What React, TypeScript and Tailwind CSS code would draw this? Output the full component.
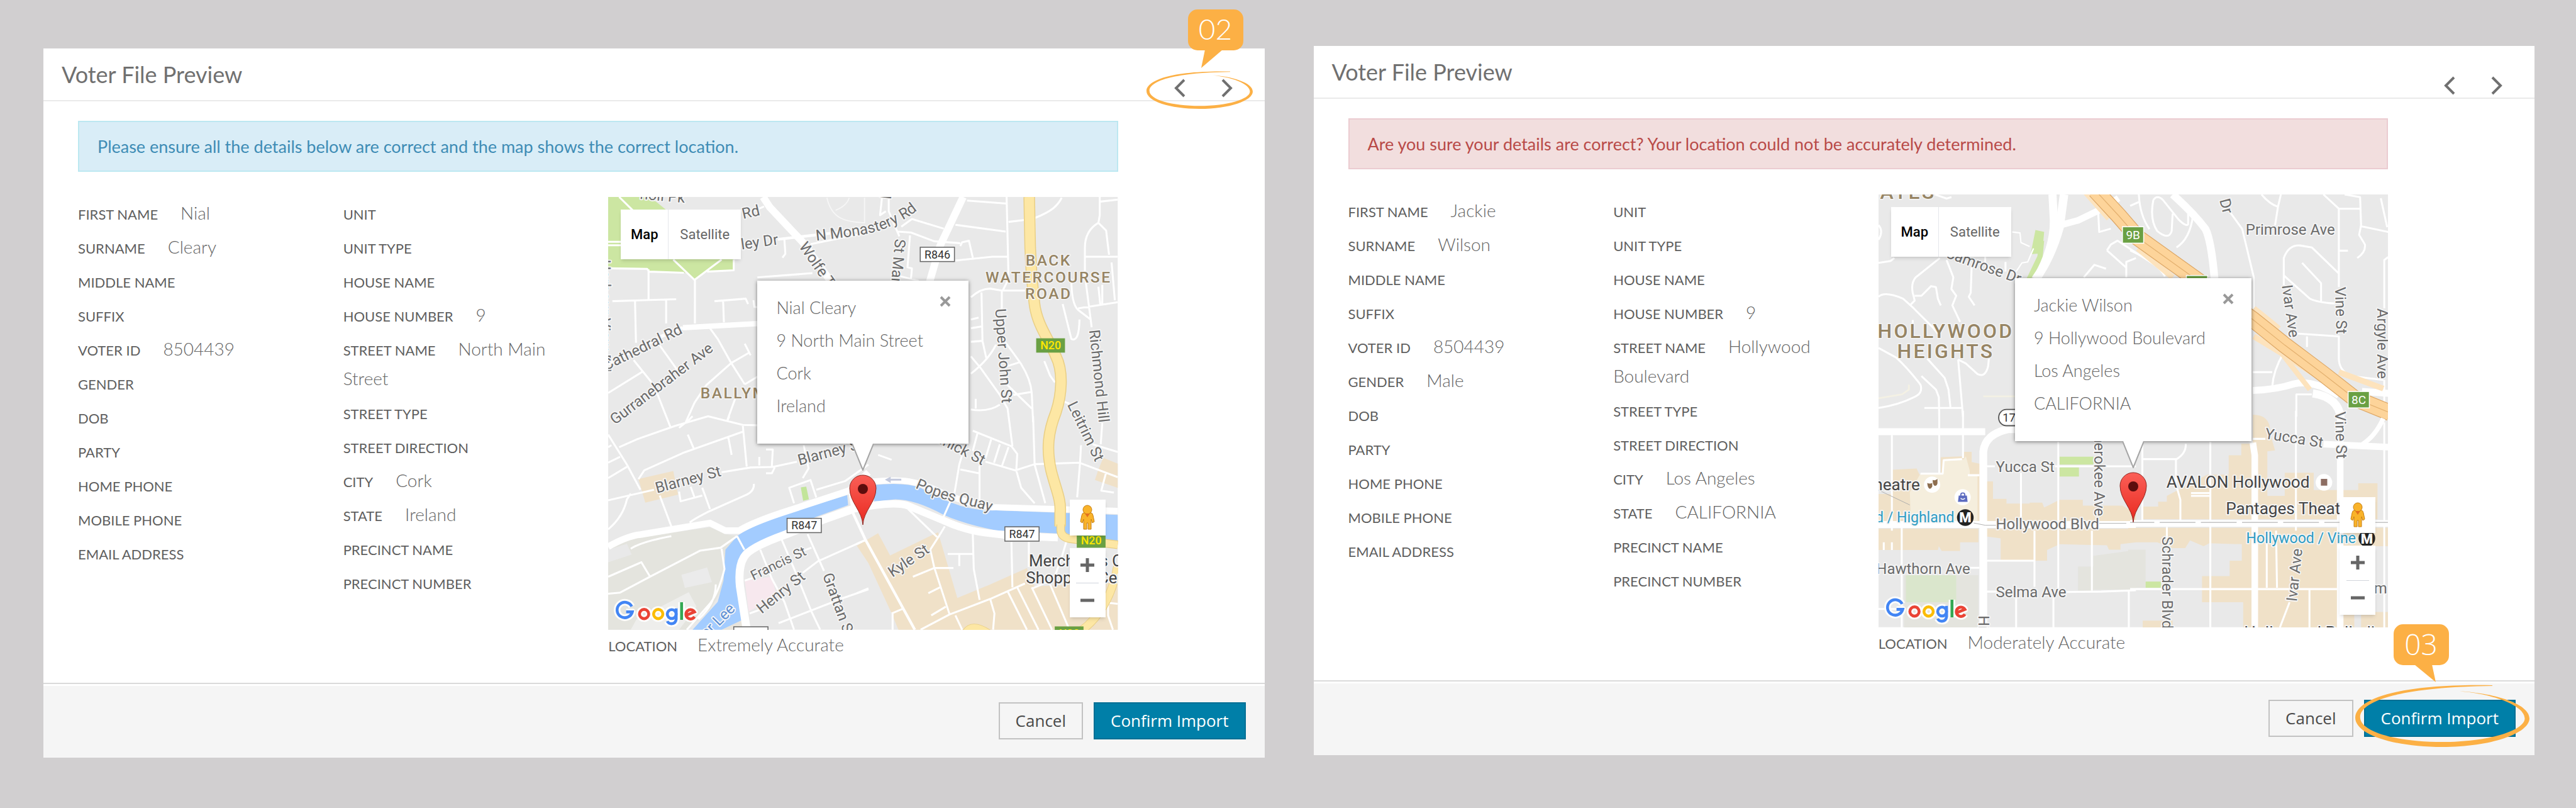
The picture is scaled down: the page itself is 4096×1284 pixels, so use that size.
import React from "react";

type Field = { label: string; value?: string };

type Voter = {
  alert: string;
  tone: "info" | "danger";
  left: Field[];
  right: Field[];
  address: string[];
  accuracy: string;
};

const nial: Voter = {
  alert: "Please ensure all the details below are correct and the map shows the correct location.",
  tone: "info",
  left: [
    { label: "FIRST NAME", value: "Nial" },
    { label: "SURNAME", value: "Cleary" },
    { label: "MIDDLE NAME" },
    { label: "SUFFIX" },
    { label: "VOTER ID", value: "8504439" },
    { label: "GENDER" },
    { label: "DOB" },
    { label: "PARTY" },
    { label: "HOME PHONE" },
    { label: "MOBILE PHONE" },
    { label: "EMAIL ADDRESS" },
  ],
  right: [
    { label: "UNIT" },
    { label: "UNIT TYPE" },
    { label: "HOUSE NAME" },
    { label: "HOUSE NUMBER", value: "9" },
    { label: "STREET NAME", value: "North Main Street" },
    { label: "STREET TYPE" },
    { label: "STREET DIRECTION" },
    { label: "CITY", value: "Cork" },
    { label: "STATE", value: "Ireland" },
    { label: "PRECINCT NAME" },
    { label: "PRECINCT NUMBER" },
  ],
  address: ["Nial Cleary", "9 North Main Street", "Cork", "Ireland"],
  accuracy: "Extremely Accurate",
};

const jackie: Voter = {
  alert: "Are you sure your details are correct? Your location could not be accurately determined.",
  tone: "danger",
  left: [
    { label: "FIRST NAME", value: "Jackie" },
    { label: "SURNAME", value: "Wilson" },
    { label: "MIDDLE NAME" },
    { label: "SUFFIX" },
    { label: "VOTER ID", value: "8504439" },
    { label: "GENDER", value: "Male" },
    { label: "DOB" },
    { label: "PARTY" },
    { label: "HOME PHONE" },
    { label: "MOBILE PHONE" },
    { label: "EMAIL ADDRESS" },
  ],
  right: [
    { label: "UNIT" },
    { label: "UNIT TYPE" },
    { label: "HOUSE NAME" },
    { label: "HOUSE NUMBER", value: "9" },
    { label: "STREET NAME", value: "Hollywood Boulevard" },
    { label: "STREET TYPE" },
    { label: "STREET DIRECTION" },
    { label: "CITY", value: "Los Angeles" },
    { label: "STATE", value: "CALIFORNIA" },
    { label: "PRECINCT NAME" },
    { label: "PRECINCT NUMBER" },
  ],
  address: ["Jackie Wilson", "9 Hollywood Boulevard", "Los Angeles", "CALIFORNIA"],
  accuracy: "Moderately Accurate",
};

/* ---------- map drawing helpers ---------- */

function Roads({ d, w = 10, c = "#ffffff" }: { d: string; w?: number; c?: string }) {
  return <path d={d} fill="none" stroke={c} strokeWidth={w} strokeLinejoin="round" />;
}

type LabelProps = {
  x: number;
  y: number;
  r?: number;
  size?: number;
  fill?: string;
  anchor?: "start" | "middle" | "end";
  children: React.ReactNode;
};

function Label({ x, y, r = 0, size = 78, fill = "#6b6b6b", anchor = "start", children }: LabelProps) {
  return (
    <text
      transform={`translate(${x} ${y}) rotate(${r})`}
      fontSize={size}
      fill={fill}
      textAnchor={anchor}
      stroke="#f5f5f5"
      strokeWidth={12}
      strokeLinejoin="round"
      paintOrder="stroke"
    >
      {children}
    </text>
  );
}

function Area({ x, y, size = 80, children }: { x: number; y: number; size?: number; children: string }) {
  return (
    <text
      x={x}
      y={y}
      fontSize={size}
      className="tracking-widest"
      fontWeight={500}
      fill="#968463"
      textAnchor="middle"
      stroke="#f5f5f5"
      strokeWidth={10}
      strokeLinejoin="round"
      paintOrder="stroke"
    >
      {children}
    </text>
  );
}

function Shield({ x, y, w = 177, children }: { x: number; y: number; w?: number; children: string }) {
  return (
    <g>
      <rect x={x} y={y} width={w} height={74} fill="#fff" stroke="#666" strokeWidth={5} />
      <text x={x + w / 2} y={y + 58} fontSize={58} textAnchor="middle" fill="#333">
        {children}
      </text>
    </g>
  );
}

function National({ x, y }: { x: number; y: number }) {
  return (
    <g>
      <rect x={x} y={y} width={149} height={74} fill="#6aa043" />
      <text x={x + 75} y={y + 57} fontSize={58} fontWeight={500} textAnchor="middle" fill="#ffe800">
        N20
      </text>
    </g>
  );
}

function Exit({ x, y, children }: { x: number; y: number; children?: string }) {
  return (
    <g>
      <rect x={x} y={y} width={110} height={85} fill="#6aa043" stroke="#fff" strokeWidth={5} />
      <text x={x + 55} y={y + 64} fontSize={62} textAnchor="middle" fill="#fff">
        {children}
      </text>
    </g>
  );
}

function GoogleShapes() {
  return (
    <>
      <path d="M155 984 A40 40 0 1 0 158 1012 H126" stroke="#4285f4" />
      <circle cx="219" cy="1023" r="24" stroke="#ea4335" />
      <circle cx="292" cy="1023" r="24" stroke="#fbbc05" />
      <path d="M385 994 V1050 Q382 1073 361 1073 Q345 1073 339 1060" stroke="#4285f4" />
      <circle cx="362" cy="1023" r="23" stroke="#4285f4" />
      <path d="M413 962 V1053" stroke="#34a853" />
      <path d="M436 1030 L480 1012 A24 24 0 1 0 480 1037" stroke="#ea4335" />
    </>
  );
}

function GoogleLogo({ x = 0, y = 0 }: { x?: number; y?: number }) {
  return (
    <g transform={`translate(${x} ${y})`} fill="none">
      <g strokeWidth={34} opacity={0.9} className="[&>*]:stroke-white" strokeLinejoin="round">
        <GoogleShapes />
      </g>
      <g strokeWidth={15}>
        <GoogleShapes />
      </g>
    </g>
  );
}

const mapClass = "block h-full w-full font-['Roboto',sans-serif]";

function CorkMap() {
  return (
    <svg viewBox="33 36 2637 2238" preserveAspectRatio="xMidYMid slice" className={mapClass} role="img" aria-label="Map of Cork">
      <rect x="33" y="36" width="2637" height="2238" fill="#e9e9e9" />
      {/* parks, blocks and river */}
      <path d="M33 36H215L280 60 330 100 683 200V415L545 422 480 460 440 428 245 422 235 408H33Z" fill="#cce6a2" />
      <g transform="translate(0 1170)">
        <path d="M33 690 160 630 560 575 640 610 700 620 620 900 560 1000 440 1104H33Z" fill="#e4e4de" />
        <path d="M33 690 130 660 155 715 33 755Z" fill="#e9e9e9" />
        <path d="M412 820 545 782 570 858 430 888Z" fill="#ebebeb" />
        <path d="M150 1104 180 1050 450 910 490 985 400 1104Z" fill="#eeeeec" />
        <path d="M190 325 370 283 395 405 225 447Z" fill="#f0e1c8" />
        <path d="M1030 368 1058 364 1072 430 1042 437Z" fill="#c2e59a" />
        <path d="M740 850 880 830 905 930 760 1010Z" fill="#f7e8ee" />
        <path d="M735 1050 620 1104H745Z" fill="#e8e4dc" />
        <path d="M1270 408 1000 490Q780 560 700 620L640 690 630 850 600 960 470 1104H620L735 1050 700 800Q710 720 740 690L950 590 1110 520 1275 460Z" fill="#a3ccff" />
      </g>
      <g transform="translate(1320 1170)">
        <path d="M0 670 110 605 172 720 420 600 520 940 690 870 880 785 920 880 1350 860V1104H215L180 1020 60 760Z" fill="#f0e1c8" />
        <path d="M1275 215 1350 245V370L1232 330 1250 275Z" fill="#f0e1c8" />
        <path d="M90 355Q250 340 330 370 450 440 560 470 640 490 720 487L1350 510V645L1100 610 720 590Q560 560 450 510 300 430 200 430L90 440Z" fill="#a3ccff" />
      </g>
      {/* minor streets */}
      <Roads d="M90 36 160 105M33 268H100M33 286H100M370 360 480 465 620 360M33 405 235 408 245 422 425 428M545 422 683 415V360M242 410V565M55 575 385 565M172 575 177 790M333 570V690M482 460V690M583 575 745 562 757 590M628 575 632 685M785 570 790 605 815 607M560 715 600 770 670 895 740 1005M765 840 670 895 540 1010 480 1100 435 1200M740 1005 815 960M740 795 770 855M290 790 390 930M165 880 270 1010 355 1225M33 1050 210 940M650 1190 690 1080M745 125 840 85M945 255 950 330 935 350M805 452 1090 430M1080 280 1380 220" />
      <Roads d="M1165 40C1190 150 1260 165 1360 170V40M1210 105Q1270 80 1280 40" w={6} c="#f6f6f6" />
      <Roads d="M910 255 1350 205" w={14} />
      <Roads d="M835 36 870 90 1040 270 1190 480" w={38} />
      <Roads d="M420 712 820 690" w={28} />
      <Roads d="M420 712 300 760 33 900" w={18} />
      <g transform="translate(1320 0)">
        <Roads d="M130 40 120 130 150 110M165 40V110L220 240M210 215 280 220 400 265 535 275M230 190 285 150 450 200M510 180 770 215M570 55 775 70M775 36 785 460 755 520M785 165 870 155M920 145C1010 110 1040 80 1060 40M275 235 262 400 285 405 280 460M200 440 320 470M510 365 700 345H780M535 290 545 270 580 262 600 350M920 140V260M1257 36V130L1250 170Q1180 210 1180 300V440L1210 670M1250 170 1290 210 1305 335M1260 60 1350 50M1180 345H1350M1065 590 1110 770Q1150 790 1152 670M1110 460Q1110 590 1145 620L1210 670 1215 710M1145 612 1350 580M1318 375 1335 570M1270 490V590M1250 500 1260 595M590 555Q640 510 690 510L750 520H870M750 520V620M645 530 650 780 670 870M590 950Q680 880 720 800M590 670 630 660M590 715 650 705M590 785 650 780M590 860 640 920 740 1060 780 1130 805 1325M730 730Q760 780 800 830L850 900Q900 980 905 1050L912 1200M750 920 845 890M760 990 905 1130M810 1060 900 1045M590 1135Q680 1150 740 1110M615 1080V1130M970 885 1000 960 1025 995M1060 1090 1100 1105" />
        <Roads d="M550 36 430 290 375 480" w={38} />
      </g>
      <g transform="translate(0 1170)">
        <Roads d="M90 160 180 120 380 50 550 0 730 45 810 47M190 325 220 280 420 190 730 80M730 50 750 260M655 110 672 200M33 95 130 250 200 380M33 160 50 150M33 240 95 210M33 320 130 262M445 95 475 165M33 435 270 380M620 290 770 265 885 262 1010 235M850 172H885L880 260M815 210V255M850 295H880L895 265M1045 150 1070 270 1040 320M995 450 970 370 1080 330 1110 420M1110 380 1260 335 1380 250M520 370 560 480M300 410 360 570M400 390 408 440 520 410M460 365 480 420M150 400 130 430Q110 520 33 585M455 550Q480 530 560 490L740 410Q790 390 787 350M150 685Q200 650 360 620M33 830 205 755 250 830M33 918 95 912 250 830 510 695 615 680 700 620M700 620 738 690M620 685 635 790Q600 930 550 980L440 1104M500 1050Q590 970 590 870M820 690 880 840 945 960 995 1104M930 635 1000 800 1085 1010 1130 1104M1065 610 1150 800M1130 745 1365 640M740 850 800 830M1085 680 1030 700M1125 745 1040 810M765 1020 820 1000M915 1070 1250 940 1380 895M400 60 450 20 470 0M650 25 660 0" />
        <Roads d="M33 675Q130 620 200 612L560 552 640 592 710 592Q780 550 930 500L1280 385 1380 290" w={34} />
        <Roads d="M1300 480 1140 537 950 612Q760 680 735 730 705 780 715 880L750 1104" w={42} />
        <Roads d="M1290 370 1310 490" w={34} />
      </g>
      <g transform="translate(1320 1170)">
        <Roads d="M60 340Q200 325 270 337 350 350 450 400 600 460 700 470L1350 490" w={32} />
        <Roads d="M-20 480Q200 435 270 465L450 540Q560 590 660 602L800 618 1040 628" w={38} />
        <Roads d="M-20 500 45 640 300 1104" w={14} />
        <Roads d="M0 660 45 640M265 480 415 625M380 690 425 620 455 570M440 540 480 450 505 400 530 250 545 200M380 690 400 780 480 1025M290 830 400 785 500 785M370 915 430 885M385 1030 460 985M180 1020 240 995M185 1020V1104M0 915 60 890M330 1104 480 1025 690 945 870 865M690 945 712 1020 705 1104M510 1030 545 1104M780 905 880 1104M830 885 940 1104M905 885 1010 1104M1000 870 1100 1104M600 610 605 790 635 950M470 712H600M530 712V775M800 650 805 885M890 650V780M1085 645 1060 730 1020 840M910 890 980 860M635 255V450M535 275 630 295M665 235 820 280 920 248 1150 240 1350 315M600 75 800 155 830 195 825 280 850 370 920 450M625 85 600 180M695 120 665 220M740 145 710 240M785 160 750 260M912 0 920 250 975 450M1160 150 1155 240 1140 420M1270 35 1262 145M1220 145 1350 185M1290 290 1265 385 1330 395M1300 960V1030L1325 1104M1300 965 1350 970M110 200 180 225" />
        <Roads d="M560 1130Q590 1060 690 1130M1350 770Q1310 1000 1160 1110" w={44} c="#e9cf86" />
        <Roads d="M560 1130Q590 1060 690 1130M1350 770Q1310 1000 1160 1110" w={38} c="#fde7a4" />
        <path d="M145 328 175 313V323H230V333H175V345Z" fill="#c3c9dd" />
      </g>
      {/* N20 */}
      <g transform="translate(1320 0)">
        {[
          { w: 60, c: "#e9cf86" },
          { w: 50, c: "#fde7a4" },
        ].map((s) => (
          <Roads
            key={s.w}
            w={s.w}
            c={s.c}
            d="M892 36 897 300 905 450 918 580C930 700 1000 780 1030 860 1070 940 1060 1060 1030 1150 990 1250 980 1340 1005 1450 1030 1550 1058 1600 1052 1670V1740"
          />
        ))}
        <Roads d="M1055 1730V1760Q1058 1795 1100 1803L1350 1835" w={44} c="#e9cf86" />
        <Roads d="M1055 1720V1760Q1058 1795 1100 1803L1350 1835" w={36} c="#fde7a4" />
      </g>
      {/* labels */}
      <Label x={196} y={46} r={5}>noll Pk</Label>
      <Label x={-8} y={360} r={90}>Harbour View Rd</Label>
      <Label x={732} y={150} r={-13}>Rd</Label>
      <Label x={724} y={308} r={-8}>ley Dr</Label>
      <path id="monastery" d="M1110 262C1250 245 1400 235 1500 185S1620 120 1680 60" fill="none" />
      <text fontSize={78} fill="#6b6b6b" stroke="#f5f5f5" strokeWidth={12} strokeLinejoin="round" paintOrder="stroke">
        <textPath href="#monastery">N Monastery Rd</textPath>
      </text>
      <Label x={1018} y={292} r={55}>Wolfe Tone</Label>
      <Label x={22} y={934} r={-26}>Cathedral Rd</Label>
      <Label x={68} y={1216} r={-37}>Gurranebraher Ave</Label>
      <Area x={745} y={1078}>BALLYMAC</Area>
      <Shield x={1648} y={296}>R846</Shield>
      <Label x={1450} y={-50} r={97}>Rd</Label>
      <Label x={1518} y={252} r={95}>St Mary's</Label>
      <Area x={2312} y={390}>BACK</Area>
      <Area x={2312} y={478}>WATERCOURSE</Area>
      <Area x={2312} y={563}>ROAD</Area>
      <Label x={2036} y={615} r={86}>Upper John St</Label>
      <National x={2248} y={767} />
      <Label x={2522} y={725} r={84}>Richmond Hill</Label>
      <Label x={2408} y={1110} r={64}>Leitrim St</Label>
      <Label x={285} y={1568} r={-15}>Blarney St</Label>
      <Label x={1022} y={1424} r={-15}>Blarney St</Label>
      <Shield x={959} y={1698}>R847</Shield>
      <Label x={785} y={2020} r={-26} size={70}>Francis St</Label>
      <Label x={828} y={2194} r={-39}>Henry St</Label>
      <Label x={1142} y={1992} r={70}>Grattan St</Label>
      <Label x={694} y={2170} r={-45} fill="#5b8fd6" anchor="end">River Lee</Label>
      <Shield x={683} y={2259}>R847</Shield>
      <Label x={1968} y={1424} r={27} anchor="end">Dominick St</Label>
      <path id="popes" d="M1620 1540Q1740 1595 1850 1620T2050 1675" fill="none" />
      <text fontSize={78} fill="#6b6b6b" stroke="#f5f5f5" strokeWidth={12} strokeLinejoin="round" paintOrder="stroke">
        <textPath href="#popes">Popes Quay</textPath>
      </text>
      <Label x={1504} y={2004} r={-34}>Kyle St</Label>
      <Shield x={2086} y={1742}>R847</Shield>
      <National x={2458} y={1776} />
      <Label x={2210} y={1948} size={84} fill="#444">Merchant's Quay</Label>
      <Label x={2195} y={2033} size={84} fill="#444">Shopping Centre</Label>
      <National x={2344} y={2257} />
      <GoogleLogo y={1170} />
    </svg>
  );
}

function Metro({ x, y }: { x: number; y: number }) {
  return (
    <g>
      <circle cx={x} cy={y} r={43} fill="#222" />
      <text x={x} y={y + 26} fontSize={72} fontWeight={900} textAnchor="middle" fill="#fff">
        M
      </text>
    </g>
  );
}

function HollywoodMap() {
  const tan = "#f0e1c8";
  const spine = "M-180 30-60 160 40 275 320 475 635 698 800 830 1000 980 1160 1105 1345 1180";
  return (
    <svg viewBox="48 51 2637 2238" preserveAspectRatio="xMidYMid slice" className={mapClass} role="img" aria-label="Map of Hollywood">
      <rect x="48" y="51" width="2637" height="2238" fill="#e9e9e9" />
      {/* blocks */}
      <path d="M860 235 905 245 895 355 835 360ZM880 300 905 290 895 400 835 490H812L870 370Z" fill="#cce6a2" />
      <g transform="translate(0 1170)">
        <path d="M48 430H120V305L245 298 260 330H370V240L490 235V212H530V265L600 280V570H48ZM605 365H640V455H710V480H830V475H895L905 500 985 460H1105V490H1310L1380 530V570H605ZM48 610H565V680H470V725H375L360 700 355 720H48ZM605 610H1380V680L1300 690V718H1240L1230 695 985 690 920 720V775H680V660L605 650Z" fill={tan} />
        <path d="M265 325H380L385 255 490 250 500 235 520 310V335H560V570H215L210 420Z" fill="#f5eedd" />
        <path d="M180 850H565V1120H180ZM1160 750 1380 720V925H1160ZM1080 805H1160V930H1080Z" fill="#e4e4de" />
        <path d="M190 850H450V990H190Z" fill="#dae6cc" />
        <path d="M985 237H1160V278H985ZM985 293H1085V340H985Z" fill="#cce6a2" />
      </g>
      <g transform="translate(1350 1170)">
        <path d="M635 20Q730 20 725 120L750 205 710 210V440H800V320H950V410H1180V375H1280V560H65V495H145V470H190V440L400 330H510V230H575V170H635ZM-10 605H1350V1120H585V990H372V855H515V775H578V690L410 685 380 700 310 670 285 710H220L140 680H-10ZM65 1085H220V1120H65Z" fill={tan} />
        <path d="M-10 718H80V915H-10Z" fill="#e4e4de" />
        <path d="M80 883H160V915H80Z" fill="#cce6a2" />
        <path d="M1160 700H1350V1040H1195V1120H1160Z" fill="#e9e9e9" />
      </g>
      {/* streets, north half */}
      <Roads d="M48 405 110 395 130 380M48 210Q75 240 48 285M340 51 400 72 425 65M365 380 240 480Q215 510 225 560L235 600 215 620M235 575H270L320 525 345 530 355 590 370 625M400 390 435 480 425 540 450 575 430 625 470 710M48 580Q80 550 175 590L230 640 330 740 370 790M530 420 525 560 515 580 545 625M600 370V400M705 400V450M48 845 140 895Q200 950 265 1035 280 1080 230 1100 150 1140 48 1155M300 900 390 1000 410 1060 420 1150M270 990 345 1060 360 1100 362 1200M285 1155H480M460 905 485 1200M460 905 500 925 560 980Q600 1000 615 940L620 890M1230 340 1250 310 1285 290 1500 430M1230 340 1330 430M1330 480V400L1380 380M1110 480 1165 415 1225 435M1185 150 1190 245 1250 228M225 700 225 740" />
      <Roads d="M740 245 780 250 785 300 830 320M760 450 790 405 820 400 850 330" w={7} />
      <Roads d="M48 1105 170 1085 205 1060V1035M590 1095H757" w={9} c="#f4f1e4" />
      <Roads d="M948 51 955 180Q960 320 865 490" w={42} />
      <Roads d="M1008 51 985 220Q940 380 860 490" w={44} />
      <Roads d="M970 215 1080 185 1215 120 1290 70" w={34} />
      <g transform="translate(1350 0)">
        <Roads d="M120 80Q140 50 170 80L250 180Q290 220 300 205V150M120 80Q100 180 140 240 200 290 215 240L220 150M45 51Q50 160 100 230M0 110 45 90M325 160Q310 280 240 325M0 340Q150 410 180 475M680 51Q720 100 765 115L780 51M765 115 750 210M515 140 580 230 640 480V660M1000 51 1080 125H1190M1110 51 1190 65 1195 210 1185 260 1215 310Q1220 350 1175 380M1195 215 1335 245M1297 70 1330 220M1080 125V530M1080 342H1127M795 520V380Q820 310 880 315L940 325 1080 460M795 470 930 590Q970 610 1060 615M890 405 988 510V605M1335 375 1315 390V640M1315 1010V1130M860 770 1080 785V900Q1080 960 1140 990L1310 1010M915 785V840M795 870Q740 960 735 1050M635 970H735M860 1200V1085H940" />
        <Roads d="M220 51Q330 150 390 230 420 290 437 490" w={40} />
        <Roads d="M635 1065Q760 1060 850 1030 950 1010 1080 1090M1200 1070 1340 1080" w={36} />
        <Roads d="M945 1080Q1080 1100 1090 1210" w={42} />
        {/* freeway */}
        <Roads d="M-230 40-110 175M40 330 220 480M640 640 770 745M640 785 780 870 1080 1060M1080 970 1310 1055" w={30} c="#fde3bd" />
        <Roads d="M790 880 930 1060" w={26} c="#fde3bd" />
        <Roads d={spine} w={86} c="#dda766" />
        <Roads d={spine} w={78} c="#fdd49a" />
        <Roads d={spine} w={4} c="#e3b06f" />
      </g>
      {/* streets, south half */}
      <g transform="translate(0 1170)">
        <Roads d="M362 0V320M485 0V245M117 125V620M168 600V1120M265 325H380L385 255 480 250M510 333H570M605 287H650M960 287H1380M785 320V560M978 160V930M855 620V910M605 775H855M1152 620V930M605 935H660M1020 937 1200 935 1380 928M760 940V1120M953 960V1120M1343 930V1120M520 812H570M48 1025H180M75 680V720M117 680V720" />
        <Roads d="M48 108H600M48 588H1380" w={36} />
        <Roads d="M590 1120V210Q600 120 720 95H760" w={40} />
        <Roads d="M48 410 210 487M540 580 600 592H660M1190 582H1330" w={3} c="#aaaaaa" />
      </g>
      <g transform="translate(1350 1170)">
        <Roads d="M0 582H1335M1000 172 1335 188M635 165 645 230V1120M1087 0V1120" w={34} />
        <Roads d="M635 145H700M858 0V620M65 250H240Q290 220 288 170M237 250V380L260 460V570M63 160V570M415 160V1120M190 600V660M707 620V915M755 620 760 915M0 922H1080M928 920V1120M825 990 775 1120M315 425H415M315 440H415M1315 60V1120" />
        <Roads d="M1200 175Q1270 130 1310 40" w={24} />
        <path d="M0 577H1335" fill="none" stroke="#b5b5b5" strokeWidth={4} strokeDasharray="185 28" strokeDashoffset="60" />
      </g>
      {/* labels */}
      <Area x={95} y={73} size={104}>ESTATES</Area>
      <Label x={775} y={514} r={20} anchor="end">Camrose Dr</Label>
      <Area x={396} y={793} size={104}>HOLLYWOOD</Area>
      <Area x={396} y={896} size={104}>HEIGHTS</Area>
      <rect x={670} y={1163} width={150} height={84} rx={40} fill="#fff" stroke="#555" strokeWidth={6} />
      <text x={690} y={1226} fontSize={60} fill="#333">170</text>
      <Exit x={1310} y={218}>9B</Exit>
      <Exit x={1641} y={470} />
      <Label x={1812} y={80} r={75}>Dr</Label>
      <Label x={1948} y={258}>Primrose Ave</Label>
      <Label x={2135} y={522} r={82}>Ivar Ave</Label>
      <Label x={2410} y={530} r={88}>Vine St</Label>
      <Label x={2628} y={640} r={90}>Argyle Ave</Label>
      <Exit x={2478} y={1070}>8C</Exit>
      <Label x={262} y={1580} size={85} fill="#444" anchor="end">Theatre</Label>
      <circle cx={325} cy={1552} r={42} fill="#fff" />
      <path d="M328 1528Q340 1533 353 1522V1545Q350 1560 338 1558 328 1552 328 1528ZM300 1543Q313 1550 326 1543V1562Q320 1574 312 1573 302 1568 300 1543Z" fill="#8d6e4f" />
      <circle cx={483} cy={1617} r={42} fill="#fff" />
      <path d="M463 1608H505L509 1641H459Z" fill="#5c6bc0" />
      <path d="M474 1612V1603Q474 1595 484 1595 494 1595 494 1603V1612" fill="none" stroke="#5c6bc0" strokeWidth={6} />
      <path d="M473 1622Q484 1634 495 1622" fill="none" stroke="#fff" strokeWidth={5} />
      <Label x={440} y={1748} size={75} fill="#2e9cc3" anchor="end">Hollywood / Highland</Label>
      <Metro x={497} y={1722} />
      <Label x={522} y={2013} anchor="end">Hawthorn Ave</Label>
      <Label x={655} y={1485}>Yucca St</Label>
      <Label x={1163} y={1715} r={90} anchor="end">Cherokee Ave</Label>
      <Label x={655} y={1782}>Hollywood Blvd</Label>
      <Label x={655} y={2133}>Selma Ave</Label>
      <Label x={565} y={2228} r={90}>Highland Ave</Label>
      <Label x={2045} y={1313} r={9}>Yucca St</Label>
      <Label x={2410} y={1175} r={88}>Vine St</Label>
      <Label x={1538} y={1568} size={85} fill="#444">AVALON Hollywood</Label>
      <circle cx={2353} cy={1540} r={43} fill="#fff" />
      <rect x={2337} y={1522} width={33} height={35} fill="#8d6e63" />
      <Label x={1845} y={1703} size={85} fill="#444">Pantages Theatre</Label>
      <Label x={2518} y={1855} size={75} fill="#2e9cc3" anchor="end">Hollywood / Vine</Label>
      <Metro x={2575} y={1830} />
      <Label x={1517} y={1820} r={90}>Schrader Blvd</Label>
      <Label x={2212} y={2158} r={-84}>Ivar Ave</Label>
      <Label x={2680} y={2113} anchor="end">Selm</Label>
      <Label x={1940} y={2345} size={85} fill="#444">Hollywood Palladium</Label>
      <GoogleLogo x={15} y={1185} />
    </svg>
  );
}

/* ---------- map overlays ---------- */

function Marker() {
  return (
    <svg viewBox="0 0 44 81" className="h-[81px] w-[44px]" aria-hidden="true">
      <defs>
        <linearGradient id="pin" x1="0" y1="0" x2="0" y2="1">
          <stop offset="0" stopColor="#fb5f57" />
          <stop offset="1" stopColor="#e8291f" />
        </linearGradient>
      </defs>
      <path d="M22 80C21 58 1 44 1 22a21 21 0 0 1 42 0C43 44 23 58 22 80Z" fill="url(#pin)" stroke="#8f2620" strokeWidth="1" />
      <circle cx="22" cy="23" r="8" fill="#5d0d0d" />
    </svg>
  );
}

function Pegman() {
  return (
    <svg viewBox="0 0 24 40" className="h-10 w-6" aria-hidden="true">
      <g fill="#f9b32a" stroke="#c77f12" strokeWidth="1">
        <path d="M6 13H18Q20 13 21 17L23 27 20 29 18 23V39H13V29H11V39H6V23L4 29 1 27 3 17Q4 13 6 13Z" />
        <circle cx="12" cy="8" r="7" />
      </g>
      <path d="M8 14 12 20 16 14Z" fill="#e2711d" />
    </svg>
  );
}

function MapView({ voter, wide, children }: { voter: Voter; wide?: boolean; children: React.ReactNode }) {
  return (
    <div className="relative aspect-[2637/2238] w-full overflow-hidden">
      {children}
      <div className="absolute top-5 left-5 flex h-[79px] bg-white font-['Roboto',sans-serif] text-[22px] shadow-md">
        <button type="button" className="w-[76px] border-r border-gray-200 font-medium text-black">
          Map
        </button>
        <button type="button" className="w-[115px] text-[#666]">
          Satellite
        </button>
      </div>

      <div className="absolute top-[441px] left-1/2 -translate-x-1/2">
        <Marker />
      </div>

      <div
        className={
          "absolute top-[133px] left-1/2 h-[259px] -translate-x-1/2 bg-white shadow-[0_1px_6px_rgba(0,0,0,0.5)] " +
          (wide ? "w-[376px]" : "w-[336px]")
        }
      >
        <ul className="pt-[17px] pl-[30px] text-[27px] leading-[52px] font-light text-[#666]">
          {voter.address.map((line) => (
            <li key={line}>{line}</li>
          ))}
        </ul>
        <button type="button" aria-label="Close" className="absolute top-6 right-7">
          <svg viewBox="0 0 18 18" className="h-[18px] w-[18px]" aria-hidden="true">
            <path d="M2 2 16 16M16 2 2 16" stroke="#999" strokeWidth="4" />
          </svg>
        </button>
        <svg viewBox="0 0 34 43" className="absolute top-full left-1/2 h-[43px] w-[34px] -translate-x-1/2" aria-hidden="true">
          <path d="M0 0 17 43 34 0Z" fill="#fff" />
          <path d="M0 0 17 42 34 0" fill="none" stroke="#a5a5a5" strokeWidth="2" />
        </svg>
      </div>

      <div className="absolute right-5 bottom-5 flex w-[57px] flex-col gap-5">
        <button type="button" aria-label="Street View" className="flex h-[57px] items-center justify-center bg-white shadow-md">
          <Pegman />
        </button>
        <div className="flex flex-col items-center bg-white shadow-md">
          <button type="button" aria-label="Zoom in" className="flex h-[55px] w-full items-center justify-center">
            <svg viewBox="0 0 22 22" className="h-[22px] w-[22px]" aria-hidden="true">
              <path d="M0 11H22M11 0V22" stroke="#666" strokeWidth="5" />
            </svg>
          </button>
          <div className="h-px w-9 bg-gray-300" />
          <button type="button" aria-label="Zoom out" className="flex h-[54px] w-full items-center justify-center">
            <svg viewBox="0 0 22 22" className="h-[22px] w-[22px]" aria-hidden="true">
              <path d="M0 11H22" stroke="#666" strokeWidth="5" />
            </svg>
          </button>
        </div>
      </div>
    </div>
  );
}

/* ---------- annotations ---------- */

function Ring({ className }: { className: string }) {
  return (
    <svg viewBox="0 0 100 100" preserveAspectRatio="none" className={"pointer-events-none absolute max-w-none " + className} aria-hidden="true">
      <path
        d="M78.7 1C20-2 0 27 0 53 0 80 22 100 50 100 78 100 100 78 100 54 100 32 82 14 60 10.5 80 15 97.3 34 97.3 54 97.3 74 76 92 50 92 24 92 2.8 76 2.8 52 2.8 29 22 4 78.7 2Z"
        fill="#fcb045"
      />
    </svg>
  );
}

function Callout({ flip, className, children }: { flip?: boolean; className: string; children: string }) {
  return (
    <div className={"pointer-events-none absolute h-[93px] w-[88px] " + className}>
      <svg viewBox="0 0 88 93" className="absolute inset-0 h-full w-full" aria-hidden="true">
        <rect width="88" height="65" rx="15" fill="#fcb045" />
        <path d={flip ? "M33 64 67 92 61 64Z" : "M27 64 21 93 55 64Z"} fill="#fcb045" />
      </svg>
      <span className="relative block text-center text-[46px] leading-[62px] font-light text-white">{children}</span>
    </div>
  );
}

/* ---------- panel ---------- */

function FieldList({ fields }: { fields: Field[] }) {
  return (
    <dl className="pt-[2px] text-[28px] leading-[47px]">
      {fields.map((f) => (
        <div key={f.label} className="mb-[7px]">
          <dt className="mr-9 inline text-[22px] leading-none text-[#5f5f5f]">{f.label}</dt>
          <dd className="inline font-light text-[#666]">{f.value}</dd>
        </div>
      ))}
    </dl>
  );
}

function Chevron({ d }: { d: string }) {
  return (
    <svg viewBox="0 0 18 30" className="h-[30px] w-[18px]" aria-hidden="true">
      <path d={d} fill="none" stroke="#707070" strokeWidth="4" />
    </svg>
  );
}

function PreviewPanel({
  voter,
  wide,
  children,
  navNote,
  confirmNote,
  className = "",
}: {
  voter: Voter;
  wide?: boolean;
  children: React.ReactNode;
  navNote?: React.ReactNode;
  confirmNote?: React.ReactNode;
  className?: string;
}) {
  const tone =
    voter.tone === "info"
      ? "border-[#bce8f1] bg-[#d9edf7] text-[#3e8cb5]"
      : "border-[#ebccd1] bg-[#f2dede] text-[#b94a48]";
  return (
    <section className={"bg-white " + className}>
      <header className="flex h-[84px] items-center justify-between border-b-2 border-[#eaeaea] pr-[51px] pl-[29px]">
        <h2 className="text-[36px] leading-none text-[#707070]">Voter File Preview</h2>
        <nav className="relative flex gap-[57px] self-end pb-1">
          <button type="button" aria-label="Previous">
            <Chevron d="M16 2 3 15 16 28" />
          </button>
          <button type="button" aria-label="Next">
            <Chevron d="M2 2 15 15 2 28" />
          </button>
          {navNote}
        </nav>
      </header>

      <div className="pt-[31px] pr-[12%] pb-[37px] pl-[55px]">
        <p role="alert" className={"border-2 py-[15px] pl-[29px] text-[27px] leading-[47px] " + tone}>
          {voter.alert}
        </p>
        <div className="mt-10 grid grid-cols-4 gap-x-[33px]">
          <FieldList fields={voter.left} />
          <FieldList fields={voter.right} />
          <div className="col-span-2">
            <MapView voter={voter} wide={wide}>
              {children}
            </MapView>
            <p className="text-[28px] leading-[47px] font-light text-[#666]">
              <span className="mr-8 text-[22px] leading-none font-normal text-[#5f5f5f]">LOCATION</span>
              {voter.accuracy}
            </p>
          </div>
        </div>
      </div>

      <footer className="flex justify-end gap-[17px] border-t-2 border-[#dadada] bg-[#f5f5f5] pt-[29px] pr-[30px] pb-[29px] font-['Open_Sans',sans-serif] text-[26px] shadow-[inset_0_3px_0_#fff]">
        <button type="button" className="h-[59px] border-2 border-[#c2c2c2] px-[25px] text-[#4a4a4a]">
          Cancel
        </button>
        <div className="relative">
          <button type="button" className="h-[59px] border-2 border-[#006f94] bg-[#007fa8] px-[25px] text-white">
            Confirm Import
          </button>
          {confirmNote}
        </div>
      </footer>
    </section>
  );
}

export default function App() {
  return (
    <main className="grid min-h-screen grid-cols-2 items-start gap-x-[78px] border-b-2 border-[#f0f0f0] bg-[#d1cfd0] pt-[73px] pr-[66px] pb-20 pl-[69px] font-['Lato',sans-serif]">
      <PreviewPanel
        voter={nial}
        className="mt-1"
        navNote={
          <>
            <Ring className="-top-3 -left-11 h-[60px] w-[169px]" />
            <Callout className="-top-[110px] left-[22px]">02</Callout>
          </>
        }
      >
        <CorkMap />
      </PreviewPanel>
      <PreviewPanel
        voter={jackie}
        wide
        confirmNote={
          <>
            <Ring className="-top-6 -left-3.5 h-[99px] w-[277px]" />
            <Callout flip className="-top-[120px] left-[47px]">
              03
            </Callout>
          </>
        }
      >
        <HollywoodMap />
      </PreviewPanel>
    </main>
  );
}
